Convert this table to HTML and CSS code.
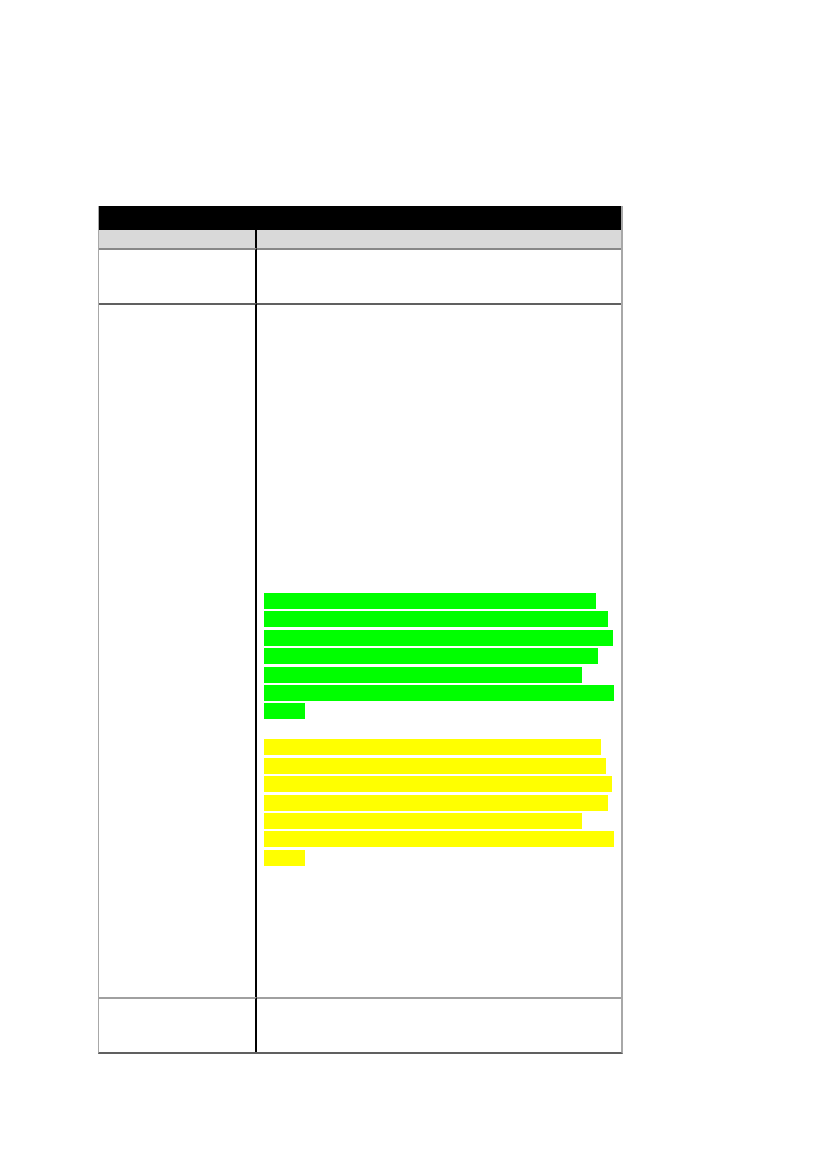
FILE: index.html
```html
<!DOCTYPE html>
<html>
<head>
<meta charset="utf-8">
<link rel="stylesheet" href="styles.css">
</head>
<body>
<div class="page">
  <div class="table">
    <div class="head"></div>
    <div class="cell sub left"></div>
    <div class="cell sub right"></div>
    <div class="cell r1 left"></div>
    <div class="cell r1 right"></div>
    <div class="cell r2 left"></div>
    <div class="cell r2 right">
      <div class="group">
        <span class="bar green" style="width:332px"></span>
        <span class="bar green" style="width:344px"></span>
        <span class="bar green" style="width:349px"></span>
        <span class="bar green" style="width:334px"></span>
        <span class="bar green" style="width:318px"></span>
        <span class="bar green" style="width:350px"></span>
        <span class="bar green" style="width:41px"></span>
      </div>
      <div class="group yellow-group">
        <span class="bar yellow" style="width:337px"></span>
        <span class="bar yellow" style="width:342px"></span>
        <span class="bar yellow" style="width:348px"></span>
        <span class="bar yellow" style="width:344px"></span>
        <span class="bar yellow" style="width:318px"></span>
        <span class="bar yellow" style="width:350px"></span>
        <span class="bar yellow" style="width:41px"></span>
      </div>
    </div>
    <div class="cell r3 left"></div>
    <div class="cell r3 right"></div>
  </div>
</div>
</body>
</html>
```

FILE: styles.css
```css
html, body {
  margin: 0;
  padding: 0;
  background: #ffffff;
  font-family: "Liberation Sans", Arial, sans-serif;
}

.page {
  padding: 206px 0 0 98px;
}

.table {
  width: 525px;
  box-sizing: border-box;
  display: grid;
  grid-template-columns: 158px 1fr;
  border-left: 1px solid #a8a8a8;
  border-right: 2px solid #a8a8a8;
  border-bottom: 2px solid #606060;
}

.head {
  grid-column: 1 / -1;
  height: 24px;
  background: #000000;
}

.cell {
  box-sizing: border-box;
}

.cell.left {
  border-right: 2px solid #000000;
}

.sub {
  height: 18px;
  background: #d9d9d9;
}

.r1 {
  height: 55px;
  border-top: 2px solid #888888;
}

.r2 {
  height: 694px;
  border-top: 2px solid #606060;
}

.r3 {
  height: 55px;
  border-top: 2px solid #a0a0a0;
}

.r2.right {
  padding: 288px 0 0 7px;
}

.group {
  display: flex;
  flex-direction: column;
  align-items: flex-start;
  gap: 2.4px;
}

.yellow-group {
  margin-top: 20px;
}

.bar {
  display: block;
  height: 16px;
}

.green {
  background: #00ff00;
}

.yellow {
  background: #ffff00;
}
```
